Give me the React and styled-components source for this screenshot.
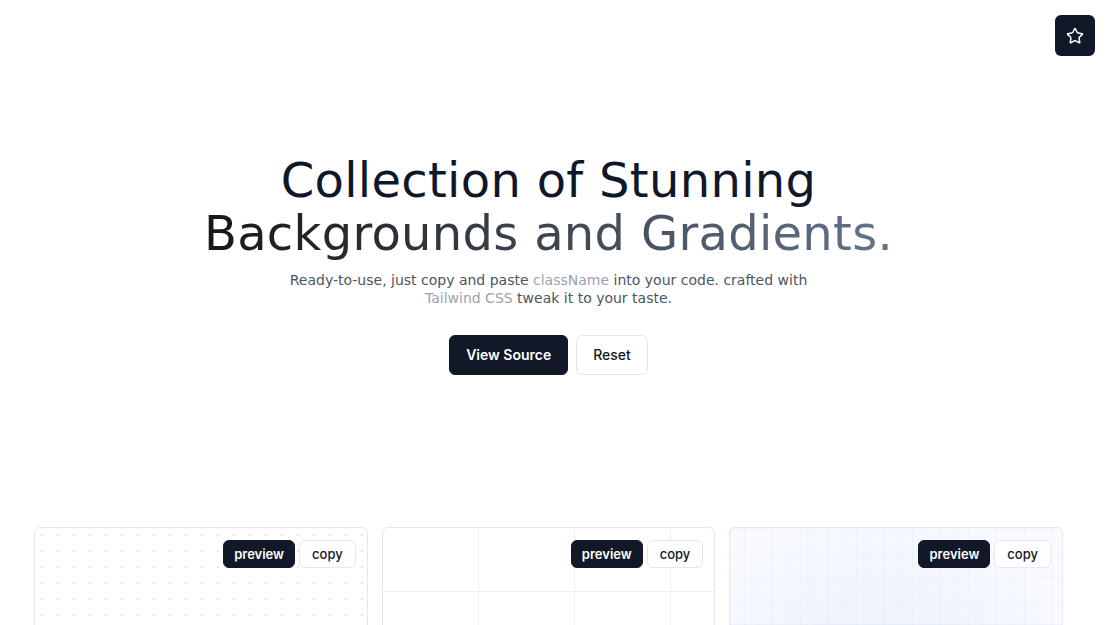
import React from "react";
import styled, { createGlobalStyle, css } from "styled-components";

const GlobalStyle = createGlobalStyle`
  html, body { margin: 0; padding: 0; background: #ffffff; }
  body {
    font-family: "DejaVu Sans", "Noto Sans", sans-serif;
    color: #111827;
    -webkit-font-smoothing: antialiased;
  }
  * { box-sizing: border-box; }
`;

const Page = styled.div`
  position: relative;
  min-height: 625px;
  padding-right: 10px;
  overflow: hidden;
`;

const StarButton = styled.button`
  position: absolute;
  top: 15px;
  right: 12px;
  width: 40px;
  height: 41px;
  border: none;
  border-radius: 6px;
  background: #111827;
  color: #ffffff;
  display: flex;
  align-items: center;
  justify-content: center;
  padding: 0;
  cursor: pointer;
`;

const Hero = styled.section`
  display: flex;
  flex-direction: column;
  align-items: center;
  padding-top: 154px;
  text-align: center;
`;

const Title = styled.h1`
  margin: 0;
  font-family: "DejaVu Sans", sans-serif;
  font-weight: 400;
  font-size: 48px;
  line-height: 52.8px;
  letter-spacing: 0.3px;
`;

const TitleLine = styled.span`
  display: block;
  color: #0f172a;
`;

const GradientLine = styled.span`
  display: inline-block;
  background: linear-gradient(to right, #171717, #64748b);
  -webkit-background-clip: text;
  background-clip: text;
  color: transparent;
`;

const Subtitle = styled.p`
  margin: 11px 0 0;
  font-size: 14px;
  line-height: 18px;
  color: #4b5563;
`;

const Muted = styled.span`
  color: #9ca3af;
`;

const Actions = styled.div`
  display: flex;
  gap: 8px;
  margin-top: 28px;
`;

const Button = styled.button`
  height: 40px;
  padding: 0 16px;
  border-radius: 6px;
  font-family: "Inter", sans-serif;
  font-size: 14px;
  font-weight: 600;
  cursor: pointer;
  ${(p) =>
    p.$primary
      ? css`
          background: #111827;
          color: #ffffff;
          border: 1px solid #111827;
        `
      : css`
          background: #ffffff;
          color: #111827;
          border: 1px solid #e5e7eb;
          font-weight: 500;
        `}
`;

const Grid = styled.section`
  display: grid;
  grid-template-columns: repeat(3, 1fr);
  gap: 14px;
  padding: 0 34px 0 34px;
  margin-top: 152px;
`;

const patterns = {
  dots: css`
    background-color: #ffffff;
    background-image: radial-gradient(#e2e5ea 1px, transparent 1px);
    background-size: 16px 16px;
    background-position: -1px -1px;
  `,
  lines: css`
    background-color: #ffffff;
    background-image: linear-gradient(to right, #eceef2 1px, transparent 1px),
      linear-gradient(to bottom, #eceef2 1px, transparent 1px);
    background-size: 96px 64px;
    background-position: -1px -1px;
  `,
  glow: css`
    background-color: #ffffff;
    background-image: linear-gradient(to right, rgba(148, 163, 184, 0.07) 1px, transparent 1px),
      linear-gradient(to bottom, rgba(148, 163, 184, 0.07) 1px, transparent 1px),
      radial-gradient(ellipse 75% 110% at 45% 100%, #e2ebfd 0%, #ebf1fe 50%, #f8faff 100%);
    background-size: 14px 24px, 14px 24px, 100% 100%;
    background-position: 0 0, 0 0, 0 0;
    border-color: #e3e8f1;
  `,
};

const Card = styled.div`
  position: relative;
  height: 320px;
  border: 1px solid #e5e7eb;
  border-radius: 6px;
  overflow: hidden;
  ${(p) => patterns[p.$pattern]}
`;

const CardBar = styled.div`
  display: flex;
  justify-content: flex-end;
  gap: 4px;
  padding: 12px 11px 0;
`;

const SmallButton = styled.button`
  height: 28px;
  border-radius: 6px;
  font-family: "Inter", sans-serif;
  font-size: 13px;
  cursor: pointer;
  ${(p) =>
    p.$primary
      ? css`
          padding: 0 10px;
          background: #111827;
          color: #ffffff;
          border: 1px solid #111827;
          font-weight: 600;
        `
      : css`
          padding: 0 12px;
          background: #ffffff;
          color: #111827;
          border: 1px solid #e5e7eb;
          font-weight: 500;
        `}
`;

const StarIcon = () => (
  <svg width="18" height="18" viewBox="0 0 24 24" fill="none" stroke="currentColor" strokeWidth="2" strokeLinecap="round" strokeLinejoin="round">
    <path d="M11.525 2.295a.53.53 0 0 1 .95 0l2.31 4.679a2.123 2.123 0 0 0 1.595 1.16l5.166.756a.53.53 0 0 1 .294.904l-3.736 3.638a2.123 2.123 0 0 0-.611 1.878l.882 5.14a.53.53 0 0 1-.771.56l-4.618-2.428a2.122 2.122 0 0 0-1.973 0L6.396 21.01a.53.53 0 0 1-.77-.56l.881-5.139a2.122 2.122 0 0 0-.611-1.879L2.16 9.795a.53.53 0 0 1 .294-.906l5.165-.755a2.122 2.122 0 0 0 1.597-1.16z" />
  </svg>
);

const cards = ["dots", "lines", "glow"];

export default function App() {
  return (
    <Page>
      <GlobalStyle />
      <StarButton aria-label="Star">
        <StarIcon />
      </StarButton>
      <Hero>
        <Title>
          <TitleLine>Collection of Stunning</TitleLine>
          <GradientLine>Backgrounds and Gradients.</GradientLine>
        </Title>
        <Subtitle>
          Ready-to-use, just copy and paste <Muted>className</Muted> into your code. crafted with
          <br />
          <Muted>Tailwind CSS</Muted> tweak it to your taste.
        </Subtitle>
        <Actions>
          <Button $primary>View Source</Button>
          <Button>Reset</Button>
        </Actions>
      </Hero>
      <Grid>
        {cards.map((c) => (
          <Card key={c} $pattern={c}>
            <CardBar>
              <SmallButton $primary>preview</SmallButton>
              <SmallButton>copy</SmallButton>
            </CardBar>
          </Card>
        ))}
      </Grid>
    </Page>
  );
}
